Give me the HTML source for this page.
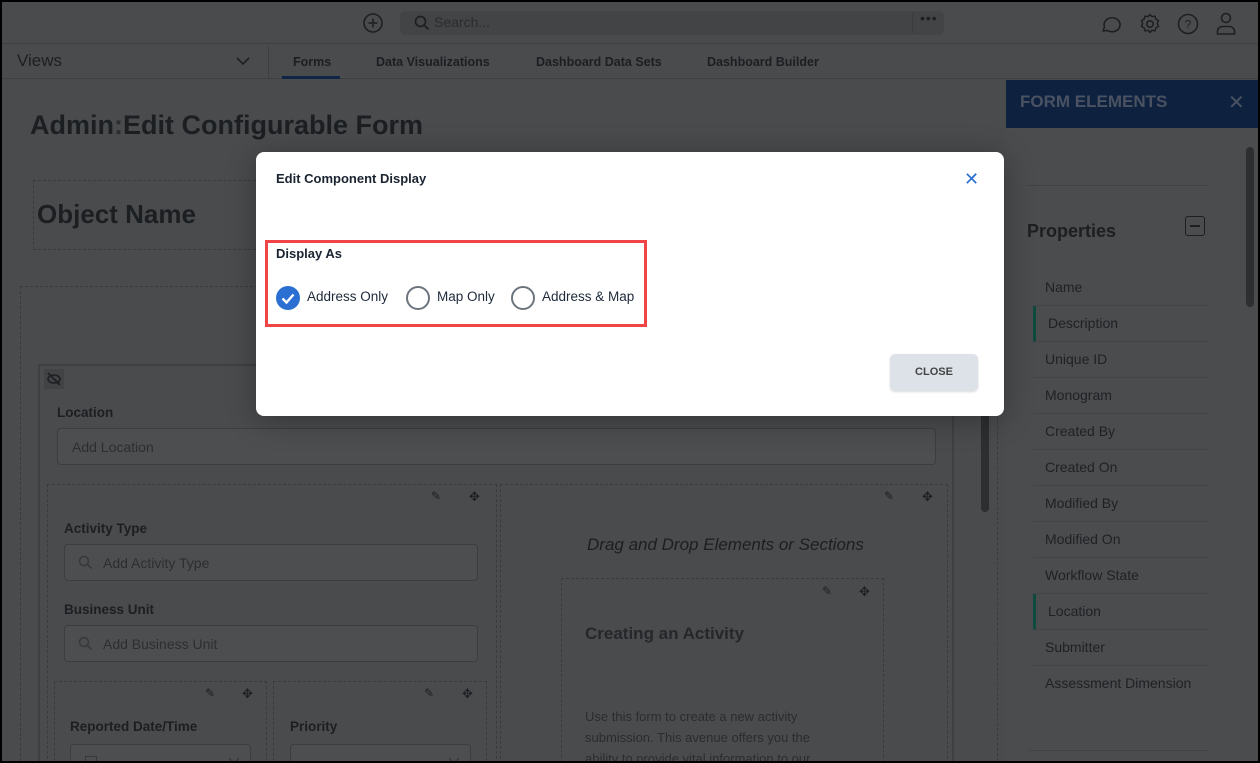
<!DOCTYPE html>
<html><head><meta charset="utf-8"><style>
*{box-sizing:border-box;margin:0;padding:0}
body{width:1260px;height:763px;overflow:hidden;background:#000;font-family:"Liberation Sans",sans-serif;position:relative}
.app{position:absolute;left:2px;top:2px;width:1256px;height:759px;background:#4a4b4d;overflow:hidden}
.a{position:absolute}
.t{color:#1c1f22}
.b{font-weight:bold}
.dash{border:1px dashed #3a3b3d}
.inp{border:1px solid #3c3d3f;border-radius:4px;background:#4d4e50;color:#2c2e31;font-size:14px;padding-left:14px;display:flex;align-items:center}
.prop{position:absolute;left:1031px;width:176px;height:36px;border-bottom:1px solid #434446;font-size:14px;color:#1e2124;padding:9px 0 0 12px}
</style></head><body>
<div class="app">
 <div class="a" style="left:0;top:0;width:1256px;height:42px;background:#4a4b4d;border-bottom:1px solid #3e3f41"></div>
 <svg class="a" style="left:360px;top:10px" width="22" height="22" viewBox="0 0 22 22"><circle cx="11" cy="11" r="9" fill="none" stroke="#1d2023" stroke-width="1.6"/><path d="M11 6.5v9M6.5 11h9" stroke="#1d2023" stroke-width="1.6"/></svg>
 <div class="a" style="left:398px;top:9px;width:544px;height:24px;background:#434446;border-radius:6px"></div>
 <svg class="a" style="left:412px;top:13px" width="16" height="16" viewBox="0 0 16 16"><circle cx="6.5" cy="6.5" r="5" fill="none" stroke="#1d2023" stroke-width="1.7"/><path d="M10 10l4.5 4.5" stroke="#1d2023" stroke-width="1.8"/></svg>
 <div class="a" style="left:432px;top:12px;font-size:14px;color:#2a2c2f">Search...</div>
 <div class="a" style="left:910px;top:11px;width:1px;height:20px;background:#3a3b3d"></div>
 <div class="a" style="left:918px;top:8px;font-size:14px;color:#1d2023;letter-spacing:1px">•••</div>
 <svg class="a" style="left:1097px;top:10px" width="24" height="24" viewBox="0 0 24 24"><path d="M4 19l1.5-4A8 7 0 1 1 8.5 18.5z" fill="none" stroke="#1d2023" stroke-width="1.6" stroke-linejoin="round"/></svg>
 <svg class="a" style="left:1136px;top:10px" width="24" height="24" viewBox="0 0 24 24"><circle cx="12" cy="12" r="3.2" fill="none" stroke="#1d2023" stroke-width="1.6"/><path d="M12 2.5l2 2.2 3-.6.8 3 2.7 1.5-1.2 2.9 1.2 2.9-2.7 1.5-.8 3-3-.6-2 2.2-2-2.2-3 .6-.8-3-2.7-1.5 1.2-2.9-1.2-2.9 2.7-1.5.8-3 3 .6z" fill="none" stroke="#1d2023" stroke-width="1.5" stroke-linejoin="round"/></svg>
 <svg class="a" style="left:1174px;top:10px" width="24" height="24" viewBox="0 0 24 24"><circle cx="12" cy="12" r="9.5" fill="none" stroke="#1d2023" stroke-width="1.6"/><text x="12" y="16.5" font-size="12" text-anchor="middle" fill="#1d2023" font-family="Liberation Sans">?</text></svg>
 <svg class="a" style="left:1212px;top:9px" width="24" height="26" viewBox="0 0 24 26"><circle cx="12" cy="7" r="4.5" fill="none" stroke="#1d2023" stroke-width="1.6"/><path d="M3.5 23v-2.5a5 5 0 0 1 5-5h7a5 5 0 0 1 5 5V23z" fill="none" stroke="#1d2023" stroke-width="1.6"/></svg>
 <div class="a" style="left:0;top:43px;width:1256px;height:34px;border-bottom:1px solid #3e3f41"></div>
 <div class="a t" style="left:15px;top:49px;font-size:17px">Views</div>
 <svg class="a" style="left:234px;top:54px" width="14" height="10"><path d="M1 2l6 6 6-6" fill="none" stroke="#1d2023" stroke-width="1.6"/></svg>
 <div class="a" style="left:266px;top:44px;width:1px;height:33px;background:#3e3f41"></div>
 <div class="a t b" style="left:291px;top:53px;font-size:12.5px">Forms</div>
 <div class="a" style="left:280px;top:74px;width:58px;height:3px;background:#0f2545"></div>
 <div class="a t b" style="left:374px;top:53px;font-size:12.5px">Data Visualizations</div>
 <div class="a t b" style="left:534px;top:53px;font-size:12.5px">Dashboard Data Sets</div>
 <div class="a t b" style="left:705px;top:53px;font-size:12.5px">Dashboard Builder</div>
 <div class="a t b" style="left:28px;top:108px;font-size:27px">Admin<span style="color:#2a2c2f">:</span>Edit Configurable Form</div>
 <div class="a dash" style="left:31px;top:178px;width:970px;height:70px"></div>
 <div class="a t b" style="left:35px;top:197px;font-size:26px">Object Name</div>
 <div class="a dash" style="left:18px;top:284px;width:978px;height:480px"></div>
 <div class="a" style="left:36px;top:362px;width:916px;height:400px;border:2px solid #3f4042"></div>
 <div class="a" style="left:42px;top:367px;width:20px;height:20px;background:#424345"></div>
 <svg class="a" style="left:44px;top:369px" width="16" height="16"><ellipse cx="8" cy="8" rx="6" ry="4" fill="none" stroke="#1d2023" stroke-width="1.6"/><path d="M2 2l12 12" stroke="#1d2023" stroke-width="1.8"/></svg>
 <div class="a t b" style="left:55px;top:403px;font-size:13.5px">Location</div>
 <div class="a inp" style="left:55px;top:426px;width:879px;height:37px">Add Location</div>
 <div class="a dash" style="left:45px;top:482px;width:450px;height:290px"></div>
 <div class="a t b" style="left:62px;top:519px;font-size:13.5px">Activity Type</div>
 <div class="a inp" style="left:62px;top:542px;width:414px;height:37px;padding-left:38px">Add Activity Type</div>
 <svg class="a" style="left:76px;top:553px" width="15" height="15"><circle cx="6" cy="6" r="4.5" fill="none" stroke="#36383b" stroke-width="1.5"/><path d="M9.5 9.5l4 4" stroke="#36383b" stroke-width="1.6"/></svg>
 <div class="a t b" style="left:62px;top:600px;font-size:13.5px">Business Unit</div>
 <div class="a inp" style="left:62px;top:623px;width:414px;height:37px;padding-left:38px">Add Business Unit</div>
 <svg class="a" style="left:76px;top:634px" width="15" height="15"><circle cx="6" cy="6" r="4.5" fill="none" stroke="#36383b" stroke-width="1.5"/><path d="M9.5 9.5l4 4" stroke="#36383b" stroke-width="1.6"/></svg>
 <div class="a dash" style="left:52px;top:679px;width:213px;height:100px"></div>
 <div class="a dash" style="left:271px;top:679px;width:214px;height:100px"></div>
 <div class="a t b" style="left:68px;top:717px;font-size:13.5px">Reported Date/Time</div>
 <div class="a t b" style="left:288px;top:717px;font-size:13.5px">Priority</div>
 <div class="a inp" style="left:68px;top:742px;width:181px;height:37px"></div>
 <div class="a" style="left:83px;top:754px;width:12px;height:10px;border:1.5px solid #36383b"></div>
 <div class="a inp" style="left:288px;top:742px;width:181px;height:37px;padding-top:14px;padding-left:18px">Select one</div>
 <svg class="a" style="left:226px;top:755px" width="12" height="8"><path d="M1 1l5 5 5-5" fill="none" stroke="#36383b" stroke-width="1.4"/></svg>
 <svg class="a" style="left:446px;top:755px" width="12" height="8"><path d="M1 1l5 5 5-5" fill="none" stroke="#36383b" stroke-width="1.4"/></svg>
 <div class="a dash" style="left:498px;top:482px;width:448px;height:290px"></div>
 <div class="a t" style="left:585px;top:533px;font-size:17px;font-style:italic">Drag and Drop Elements or Sections</div>
 <div class="a dash" style="left:559px;top:576px;width:323px;height:200px"></div>
 <div class="a" style="left:583px;top:622px;font-size:17px;font-weight:bold;color:#25282b">Creating an Activity</div>
 <div class="a" style="left:583px;top:704px;font-size:13px;line-height:21px;color:#2a2c2f;width:256px">Use this form to create a new activity submission. This avenue offers you the ability to provide vital information to our</div>
 <div class="a" style="left:979px;top:410px;width:8px;height:100px;background:#2d2e30;border-radius:4px"></div>
 <div class="a t" style="left:429px;top:487px;font-size:12px">✎</div><div class="a t" style="left:467px;top:487px;font-size:13px">✥</div>
 <div class="a t" style="left:882px;top:487px;font-size:12px">✎</div><div class="a t" style="left:920px;top:487px;font-size:13px">✥</div>
 <div class="a t" style="left:820px;top:582px;font-size:12px">✎</div><div class="a t" style="left:857px;top:582px;font-size:13px">✥</div>
 <div class="a t" style="left:203px;top:684px;font-size:12px">✎</div><div class="a t" style="left:240px;top:684px;font-size:13px">✥</div>
 <div class="a t" style="left:422px;top:684px;font-size:12px">✎</div><div class="a t" style="left:460px;top:684px;font-size:13px">✥</div>
 <div class="a" style="left:1004px;top:78px;width:252px;height:681px;background:#4b4c4e"></div>
 <div class="a" style="left:1004px;top:78px;width:252px;height:48px;background:#0e2240"></div>
 <div class="a" style="left:1018px;top:90px;font-size:17px;font-weight:bold;color:#4a5262">FORM ELEMENTS</div>
 <div class="a" style="left:1226px;top:88px;font-size:20px;color:#4a5262">✕</div>
 <div class="a" style="left:1025px;top:183px;width:182px;height:1px;background:#404143"></div>
 <div class="a t b" style="left:1025px;top:219px;font-size:18px;color:#1c1f22">Properties</div>
 <div class="a" style="left:1183px;top:214px;width:20px;height:20px;border:1.6px solid #1d2023;border-radius:3px"></div>
 <div class="a" style="left:1188px;top:223px;width:10px;height:2px;background:#1d2023"></div>
 <div class="prop" style="top:268px">Name</div>
 <div class="prop" style="top:304px;border-left:3px solid #0d4a3f">Description</div>
 <div class="prop" style="top:340px">Unique ID</div>
 <div class="prop" style="top:376px">Monogram</div>
 <div class="prop" style="top:412px">Created By</div>
 <div class="prop" style="top:448px">Created On</div>
 <div class="prop" style="top:484px">Modified By</div>
 <div class="prop" style="top:520px">Modified On</div>
 <div class="prop" style="top:556px">Workflow State</div>
 <div class="prop" style="top:592px;border-left:3px solid #0d4a3f">Location</div>
 <div class="prop" style="top:628px">Submitter</div>
 <div class="prop" style="top:664px;border-bottom:none">Assessment Dimension</div>
 <div class="a" style="left:1027px;top:748px;width:180px;height:1px;background:#404143"></div>
 <div class="a" style="left:1244px;top:145px;width:8px;height:160px;background:#2d2e30;border-radius:4px"></div>
 <div class="a" style="left:254px;top:150px;width:748px;height:264px;background:#fff;border-radius:8px;box-shadow:0 4px 30px rgba(0,0,0,.3)"></div>
 <div class="a" style="left:274px;top:169px;font-size:13px;font-weight:bold;color:#1a2330">Edit Component Display</div>
 <div class="a" style="left:962px;top:167px;font-size:18px;color:#2a6fd1">✕</div>
 <div class="a" style="left:263px;top:238px;width:382px;height:87px;border:3px solid #f04447"></div>
 <div class="a" style="left:274px;top:244px;font-size:13px;font-weight:bold;color:#1a2330">Display As</div>
 <svg class="a" style="left:273px;top:283px" width="26" height="26"><circle cx="13" cy="13" r="12" fill="#2a6fd1"/><path d="M7.5 13.5l4 4 7-8" fill="none" stroke="#fff" stroke-width="2.4"/></svg>
 <div class="a" style="left:305px;top:287px;font-size:13.5px;color:#1e2a3a">Address Only</div>
 <svg class="a" style="left:403px;top:283px" width="26" height="26"><circle cx="13" cy="13" r="11" fill="none" stroke="#6c757d" stroke-width="2"/></svg>
 <div class="a" style="left:435px;top:287px;font-size:13.5px;color:#1e2a3a">Map Only</div>
 <svg class="a" style="left:508px;top:283px" width="26" height="26"><circle cx="13" cy="13" r="11" fill="none" stroke="#6c757d" stroke-width="2"/></svg>
 <div class="a" style="left:540px;top:287px;font-size:13.5px;color:#1e2a3a">Address &amp; Map</div>
 <div class="a" style="left:888px;top:352px;width:88px;height:37px;background:#dde1e8;border-radius:5px;font-size:11px;font-weight:bold;color:#444;text-align:center;line-height:37px;box-shadow:0 1px 2px rgba(0,0,0,.15)">CLOSE</div>
</div>
</body></html>
